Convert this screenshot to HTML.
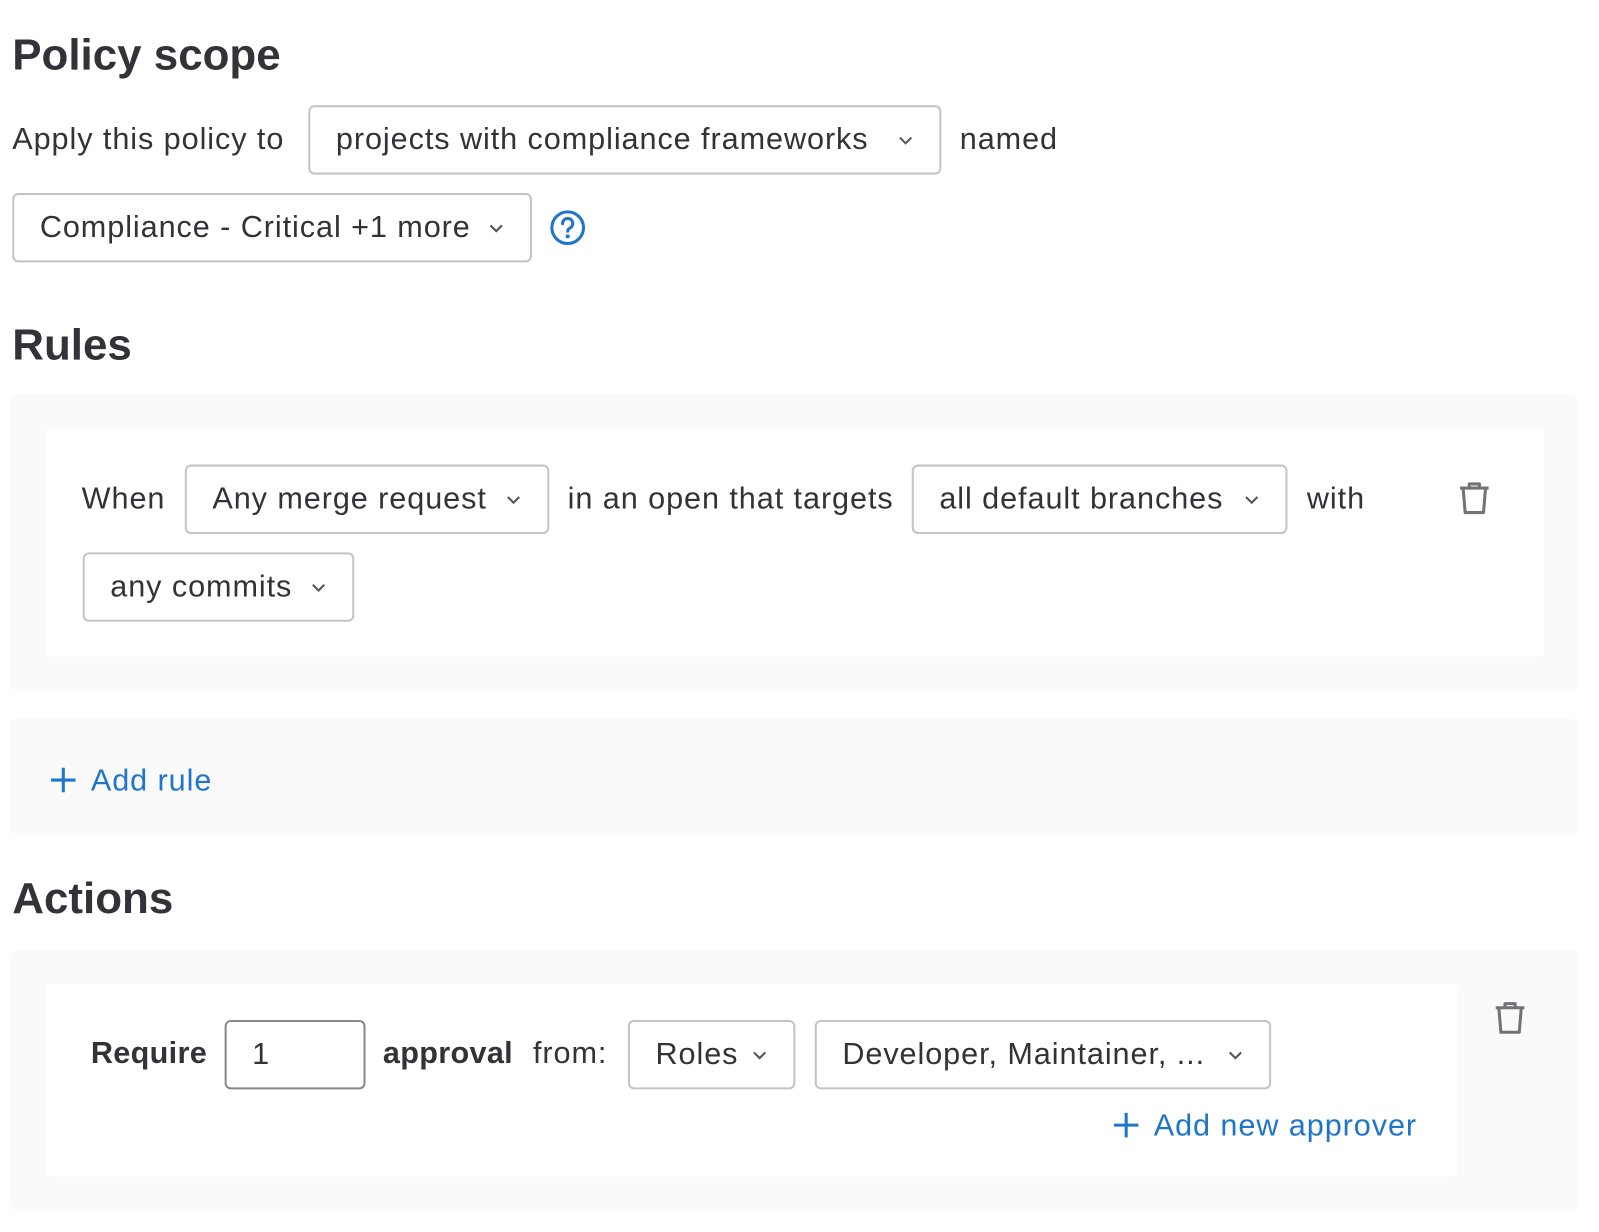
<!DOCTYPE html>
<html><head><meta charset="utf-8"><style>
body{margin:0;width:1599px;height:1232px;background:#fff;overflow:hidden;font-family:"Liberation Sans",sans-serif;color:#333238}
#w{position:absolute;left:0;top:0;width:1560px;height:1202px;transform:scale(1.021);transform-origin:0 0}
.a{position:absolute;white-space:nowrap}
h2{position:absolute;margin:0;font-size:43px;font-weight:bold;left:12px;line-height:1}
.t{position:absolute;font-size:30px;letter-spacing:0.9px;line-height:1;white-space:nowrap;transform:translateY(-50%)}
.dd{position:absolute;box-sizing:border-box;border:2px solid #c4c4c7;border-radius:6px;background:#fff;font-size:30px;letter-spacing:0.9px;display:flex;align-items:center;padding-left:25px;white-space:nowrap}
.dd svg{position:absolute;right:24px;top:50%;margin-top:-9px}
.box{position:absolute;background:#fafafb;border-radius:8px}
.in{position:absolute;background:#fff;border-radius:4px}
.blue{color:#1f75cb}
</style></head><body><div id="w">
<h2 style="top:33px">Policy scope</h2>
<div class="t" style="left:12px;top:137px">Apply this policy to</div>
<div class="dd" style="left:302px;top:103px;width:620px;height:68px">projects with compliance frameworks<svg width="18" height="18" viewBox="0 0 16 16"><path d="M3 6l5 5 5-5" fill="none" stroke="#555" stroke-width="1.8"/></svg></div>
<div class="t" style="left:940px;top:137px">named</div>
<div class="dd" style="left:12px;top:189px;width:509px;height:68px">Compliance - Critical +1 more<svg width="18" height="18" viewBox="0 0 16 16"><path d="M3 6l5 5 5-5" fill="none" stroke="#555" stroke-width="1.8"/></svg></div>
<svg class="a" style="left:538px;top:205px" width="36" height="36" viewBox="0 0 36 36"><circle cx="18" cy="18" r="15.5" fill="none" stroke="#1f75cb" stroke-width="3"/><path d="M13 14a5 5 0 1 1 7 4.5c-1.5.8-2 1.5-2 3" fill="none" stroke="#1f75cb" stroke-width="3" stroke-linecap="round"/><circle cx="18" cy="26.5" r="2" fill="#1f75cb"/></svg>

<h2 style="top:317px">Rules</h2>
<div class="box" style="left:10px;top:386px;width:1536px;height:291px"></div>
<div class="in" style="left:45px;top:420px;width:1467px;height:223px"></div>
<div class="t" style="left:80px;top:489px">When</div>
<div class="dd" style="left:181px;top:455px;width:357px;height:68px">Any merge request<svg width="18" height="18" viewBox="0 0 16 16"><path d="M3 6l5 5 5-5" fill="none" stroke="#555" stroke-width="1.8"/></svg></div>
<div class="t" style="left:556px;top:489px">in an open that targets</div>
<div class="dd" style="left:893px;top:455px;width:368px;height:68px">all default branches<svg width="18" height="18" viewBox="0 0 16 16"><path d="M3 6l5 5 5-5" fill="none" stroke="#555" stroke-width="1.8"/></svg></div>
<div class="t" style="left:1280px;top:489px">with</div>
<svg class="a" style="left:1428px;top:471px" width="32" height="34" viewBox="0 0 32 34"><path d="M2 7h28M11 7V3h10v4M5 7l2 24h18l2-24" fill="none" stroke="#737278" stroke-width="3" stroke-linejoin="round"/></svg>
<div class="dd" style="left:81px;top:541px;width:266px;height:68px">any commits<svg width="18" height="18" viewBox="0 0 16 16"><path d="M3 6l5 5 5-5" fill="none" stroke="#555" stroke-width="1.8"/></svg></div>

<div class="box" style="left:10px;top:704px;width:1536px;height:114px"></div>
<svg class="a" style="left:48px;top:750px" width="28" height="28" viewBox="0 0 28 28"><path d="M14 2v24M2 14h24" stroke="#1f75cb" stroke-width="3"/></svg>
<div class="t blue" style="left:89px;top:765px">Add rule</div>

<h2 style="top:859px">Actions</h2>
<div class="box" style="left:10px;top:930px;width:1536px;height:256px"></div>
<div class="in" style="left:45px;top:964px;width:1382px;height:188px"></div>
<div class="t" style="left:89px;top:1032px;font-weight:bold;letter-spacing:0.3px">Require</div>
<div class="dd" style="left:220px;top:999px;width:138px;height:68px;border-color:#89888d">1</div>
<div class="t" style="left:375px;top:1032px;font-weight:bold;letter-spacing:0.3px">approval</div>
<div class="t" style="left:522px;top:1032px">from:</div>
<div class="dd" style="left:615px;top:999px;width:164px;height:68px">Roles<svg width="18" height="18" viewBox="0 0 16 16"><path d="M3 6l5 5 5-5" fill="none" stroke="#555" stroke-width="1.8"/></svg></div>
<div class="dd" style="left:798px;top:999px;width:447px;height:68px">Developer, Maintainer, ...<svg width="18" height="18" viewBox="0 0 16 16"><path d="M3 6l5 5 5-5" fill="none" stroke="#555" stroke-width="1.8"/></svg></div>
<svg class="a" style="left:1463px;top:980px" width="32" height="34" viewBox="0 0 32 34"><path d="M2 7h28M11 7V3h10v4M5 7l2 24h18l2-24" fill="none" stroke="#737278" stroke-width="3" stroke-linejoin="round"/></svg>
<svg class="a" style="left:1089px;top:1088px" width="28" height="28" viewBox="0 0 28 28"><path d="M14 2v24M2 14h24" stroke="#1f75cb" stroke-width="3"/></svg>
<div class="t blue" style="left:1130px;top:1103px">Add new approver</div>
</div></body></html>
